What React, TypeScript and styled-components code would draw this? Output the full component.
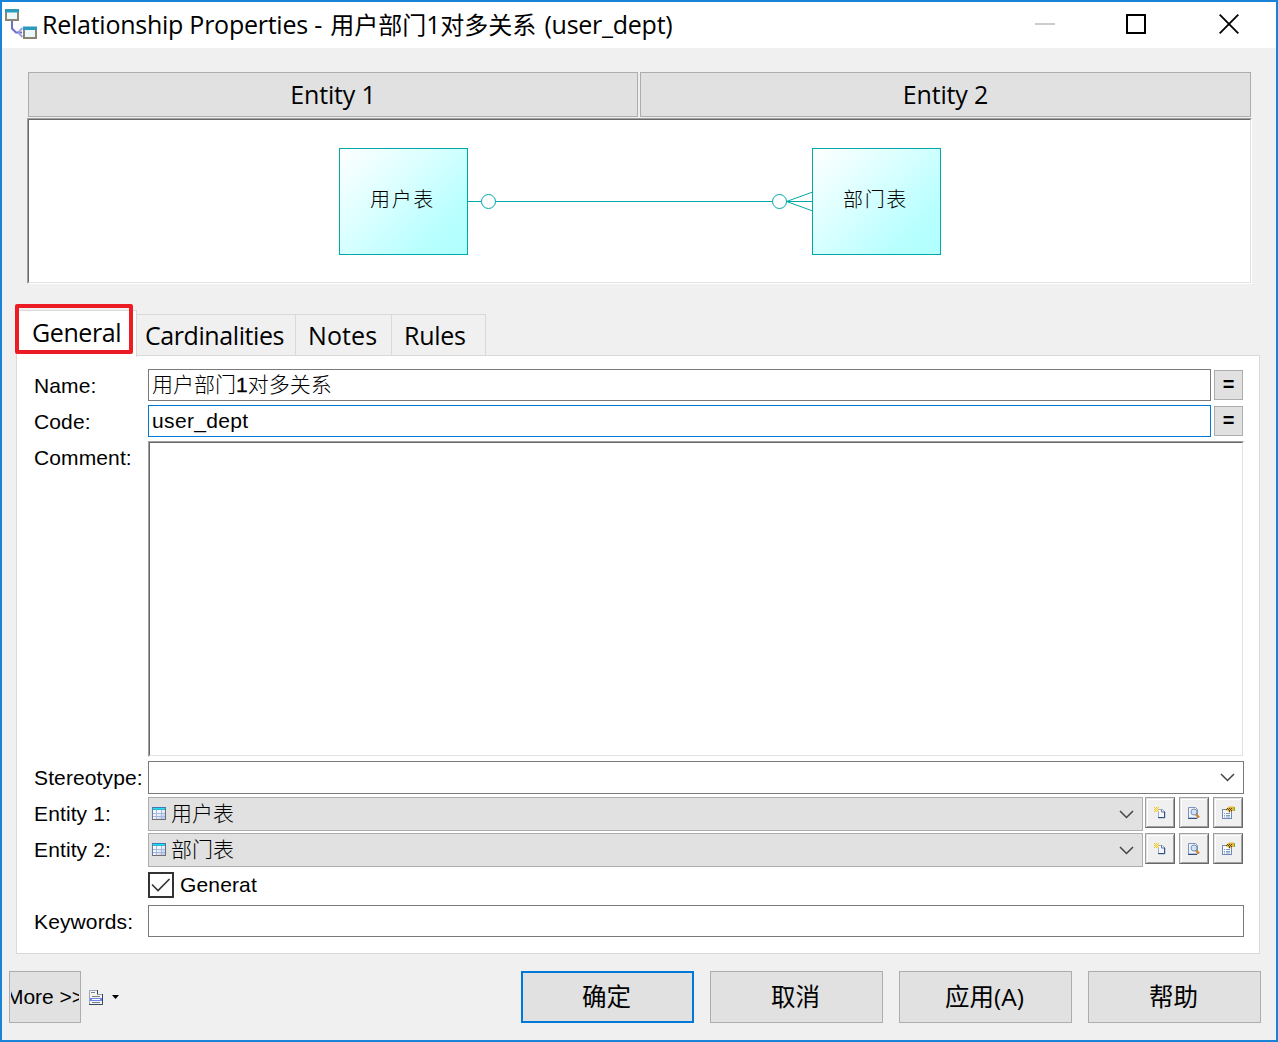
import React from "react";
import styled, { createGlobalStyle, css } from "styled-components";

const UI = `"Open Sans", "Noto Sans CJK SC", sans-serif`;
const FORM = `"Liberation Sans", "Noto Sans CJK SC", sans-serif`;

const GlobalStyle = createGlobalStyle`
  *, *::before, *::after { box-sizing: border-box; }
  body { margin: 0; }
  svg { display: block; flex: none; }
`;

const Window = styled.div`
  width: 1278px;
  height: 1042px;
  border: 2px solid #1883d7;
  background: #f0f0f0;
  color: #000;
  display: flex;
  flex-direction: column;
  overflow: hidden;
  font-family: ${FORM};
`;

const TitleBar = styled.header`
  height: 46px;
  background: #fff;
  display: flex;
  align-items: center;
  padding: 0 0 2px 3px;
  flex: none;
`;

const Title = styled.h1`
  margin: 0 0 0 5px;
  flex: 1;
  font: 400 25px/43px ${UI};
  letter-spacing: -0.25px;
  white-space: nowrap;
`;

const Cjk = styled.span<{ $before?: number; $after?: number }>`
  font-size: 24px;
  letter-spacing: 0;
  margin-left: ${(p) => p.$before ?? 0}px;
  margin-right: ${(p) => p.$after ?? 0}px;
`;

const Caption = styled.div`
  display: flex;
  align-items: center;
  gap: 71px;
  padding-right: 37px;
`;

const CloseIcon = styled.svg`
  margin-left: 2px;
`;

const Preview = styled.section`
  margin: 24px 24px 0 25px;
  flex: none;
`;

const HeaderCells = styled.div`
  display: grid;
  grid-template-columns: 610px 611px;
  gap: 2px;
  margin-left: 1px;
`;

const HeaderCell = styled.div`
  height: 45px;
  border: 1px solid #adadad;
  background: #e1e1e1;
  text-align: center;
  font: 400 25px/43px ${UI};
  letter-spacing: -0.15px;
`;

const sunken = css`
  border: 1px solid;
  border-color: #a0a0a0 #fff #fff #a0a0a0;
  background: #fff;
  &::before {
    content: "";
    display: block;
    height: 100%;
    border: 1px solid;
    border-color: #696969 #e3e3e3 #e3e3e3 #696969;
  }
`;

const Canvas = styled.div`
  margin-top: 1px;
  height: 166px;
  border: 1px solid;
  border-color: #a0a0a0 #fff #fff #a0a0a0;
`;

const CanvasInner = styled.div`
  height: 164px;
  border: 1px solid;
  border-color: #696969 #e3e3e3 #e3e3e3 #696969;
  background: #fff;
  display: flex;
  padding: 28px 0 0 310px;
`;

const EntityBox = styled.div`
  width: 129px;
  height: 107px;
  border: 1px solid #00a8a8;
  background: linear-gradient(135deg, #fff 0%, #d4ffff 48%, #b8ffff 78%, #b0ffff 100%);
  text-align: center;
  padding-right: 2px;
  font: 300 20px/103px ${FORM};
  letter-spacing: 1.6px;
  flex: none;
`;

const Tabs = styled.nav`
  display: flex;
  align-items: flex-end;
  height: 53px;
  margin: 20px 0 -2px 13px;
  position: relative;
  flex: none;
`;

const ActiveTab = styled.div`
  width: 121px;
  height: 47px;
  margin-left: 1px;
  border: 1px solid #d9d9d9;
  border-bottom: 0;
  background: #fff;
  padding-left: 15px;
  font: 400 25px/42px ${UI};
  letter-spacing: -0.4px;
  position: relative;
`;

const Highlight = styled.div`
  position: absolute;
  left: -2px;
  top: -7px;
  width: 118px;
  height: 50px;
  border: 4px solid #ed1c24;
  border-radius: 2px;
`;

const Tab = styled.div<{ $w: number; $pad: number; $ls?: number }>`
  width: ${(p) => p.$w}px;
  height: 41px;
  margin-bottom: 2px;
  border: 1px solid #d9d9d9;
  border-left: 0;
  border-bottom: 0;
  padding-left: ${(p) => p.$pad}px;
  font: 400 25px/41px ${UI};
  letter-spacing: ${(p) => p.$ls ?? -0.3}px;
`;

const Panel = styled.section`
  width: 1244px;
  height: 599px;
  margin-left: 14px;
  border: 1px solid #d9d9d9;
  background: #fff;
  padding: 13px 0 0 17px;
  flex: none;
`;

const Row = styled.div<{ $h?: number }>`
  display: flex;
  align-items: flex-start;
  height: ${(p) => p.$h ?? 36}px;
`;

const Label = styled.label`
  width: 114px;
  font-size: 21px;
  line-height: 34px;
  letter-spacing: 0.12px;
  white-space: nowrap;
  flex: none;
`;

const Field = styled.div<{ $w: number; $h?: number; $active?: boolean }>`
  width: ${(p) => p.$w}px;
  height: ${(p) => p.$h ?? 32}px;
  border: 1px solid ${(p) => (p.$active ? "#0078d7" : "#7a7a7a")};
  background: #fff;
  padding: 0 8px 0 3px;
  display: flex;
  align-items: center;
  font-size: 21px;
  line-height: 30px;
  font-weight: 300;
  flex: none;
`;

const FieldText = styled.span<{ $ls?: number }>`
  display: block;
  flex: 1;
  height: 30px;
  letter-spacing: ${(p) => p.$ls ?? 0}px;
  white-space: nowrap;
`;

const Digit = styled.span`
  font-weight: 400;
  -webkit-text-stroke: 0.3px #000;
`;

const EqualsButton = styled.div`
  width: 29px;
  height: 30px;
  margin: 1px 0 0 3px;
  border: 1px solid #adadad;
  background: #e1e1e1;
  display: flex;
  align-items: center;
  justify-content: center;
`;

const EqualsSign = styled.span`
  font-weight: 700;
  font-size: 20px;
  line-height: 27px;
  height: 28px;
`;

const CommentBox = styled.div`
  width: 1096px;
  height: 316px;
  ${sunken}
`;

const Combo = styled.div`
  width: 995px;
  height: 34px;
  border: 1px solid #adadad;
  background: #e1e1e1;
  padding: 0 8px 0 3px;
  display: flex;
  align-items: center;
  font-size: 21px;
  line-height: 32px;
  font-weight: 300;
  flex: none;
`;

const ComboText = styled.span`
  flex: 1;
  height: 32px;
  margin-left: 5px;
`;

const Tools = styled.div`
  display: flex;
  gap: 4px;
  margin-left: 2px;
`;

const ToolButton = styled.div`
  width: 30px;
  height: 31px;
  border: 1px solid;
  border-color: #a0a0a0 #696969 #696969 #a0a0a0;
  background: #f0f0f0;
  box-shadow: inset 1px 1px #e3e3e3, inset -1px -1px #a0a0a0, inset 2px 2px #fff;
  display: flex;
  align-items: center;
  justify-content: center;
`;

const CheckBox = styled.div`
  width: 26px;
  height: 26px;
  margin: 3px 6px 0 114px;
  border: 2px solid #333;
`;

const CheckLabel = styled.span`
  font-size: 21px;
  line-height: 32px;
  letter-spacing: 0.15px;
`;

const Footer = styled.footer`
  display: flex;
  align-items: flex-start;
  padding: 17px 15px 0 7px;
`;

const MoreButton = styled.div`
  width: 72px;
  height: 52px;
  border: 1px solid #adadad;
  background: #e1e1e1;
  display: flex;
  justify-content: center;
  padding: 0 1px;
  font-size: 21px;
  line-height: 50px;
`;

const MoreText = styled.span`
  width: 68px;
  overflow: hidden;
  display: flex;
  justify-content: center;
  white-space: nowrap;
`;

const MenuButton = styled.div`
  display: flex;
  align-items: center;
  gap: 9px;
  height: 52px;
  margin-left: 8px;
  flex: 1;
`;

const Actions = styled.div`
  display: flex;
  gap: 16px;
`;

const Action = styled.div<{ $primary?: boolean }>`
  width: 173px;
  height: 52px;
  border: ${(p) => (p.$primary ? "2px solid #0078d7" : "1px solid #adadad")};
  background: #e1e1e1;
  display: flex;
  align-items: center;
  justify-content: center;
  padding-right: 2px;
  font: 400 24.5px/52px ${UI};
`;

const RelationshipIcon = () => (
  <svg width="32" height="32" viewBox="0 0 32 32">
    <path d="M7 13v7.500l4 4H17" fill="none" stroke="#6a70c8" strokeWidth="2" />
    <path d="M13 24.500l4.500-4.500M13 24.500l4.500 4.500" stroke="#9aa2ea" strokeWidth="2" />
    <rect x="1" y="2" width="12" height="10" fill="#eafafc" stroke="#8d8372" strokeWidth="2" />
    <rect x="0" y="1" width="14" height="3.500" fill="#2b9abb" />
    <rect x="19" y="20" width="12" height="10" fill="#eafafc" stroke="#8d8372" strokeWidth="2" />
    <rect x="18" y="18.500" width="14" height="3.500" fill="#2b9abb" />
  </svg>
);

const Connector = () => (
  <svg width="344" height="105" viewBox="468 148 344 105" fill="none" stroke="#00a8a8">
    <path d="M468 201.500H481.500M495.500 201.500H772.500M786.500 201.500H812" />
    <circle cx="488.500" cy="201.500" r="7" />
    <circle cx="779.500" cy="201.500" r="7" />
    <path d="M786.500 201.500L812 192.300M786.500 201.500L812 210.700" />
  </svg>
);

const Chevron = () => (
  <svg width="15" height="9" viewBox="0 0 15 9">
    <path d="M1 1l6.500 6.500L14 1" fill="none" stroke="#444" strokeWidth="1.500" />
  </svg>
);

const TableIcon = () => (
  <svg width="14" height="14" viewBox="0 0 14 14">
    <defs>
      <linearGradient id="cells" x1="0" y1="0" x2="1" y2="1">
        <stop offset="0" stopColor="#fff" />
        <stop offset=".5" stopColor="#f0f4ff" />
        <stop offset="1" stopColor="#a9c0f2" />
      </linearGradient>
    </defs>
    <rect x=".5" y=".5" width="13" height="12" fill="url(#cells)" />
    <path d="M1 6.500h12M1 9.500h12M4.500 3v9M9.500 3v9" stroke="#a9b7d6" />
    <path d="M.5 0v13" stroke="#5b7fb4" />
    <path d="M13.500 0v13M0 12.500h14" stroke="#746f68" />
    <path d="M0 .5h14" stroke="#3f78b8" />
    <path d="M1 1.500h12" stroke="#17e3f2" />
    <path d="M1 2.500h12" stroke="#35b3cf" />
  </svg>
);

const NewIcon = () => (
  <svg width="12" height="12" viewBox="0 0 12 12">
    <path d="M4.500 2.500h4l2.500 2.500v6h-6.500z" fill="#f4f7ff" stroke="#9dabc8" />
    <path d="M10.500 4.500V10.500H4" fill="none" stroke="#34507f" />
    <path d="M7.500 2.500v2.500H10" fill="none" stroke="#5d77a3" />
    <rect width="5" height="5" fill="#fdf3b8" />
    <path d="M0 .5h1M2 .5h1M4 .5h1M1 1.500h1M3 1.500h1M0 2.500h1M2 2.500h1M4 2.500h1M1 3.500h1M3 3.500h1M0 4.500h1M2 4.500h1M4 4.500h1" stroke="#e8c23a" />
  </svg>
);

const FindIcon = () => (
  <svg width="12" height="12" viewBox="0 0 12 12">
    <path d="M.5.500h7l2 2v8.500h-9z" fill="#eef3ff" stroke="#7d93ba" />
    <circle cx="6" cy="5" r="3" fill="#cfe4f8" stroke="#7f90ab" />
    <path d="M8 7.500l3 3" stroke="#cf8433" strokeWidth="2.400" />
    <path d="M0 11.500h9" stroke="#34507f" />
  </svg>
);

const PropertiesIcon = () => (
  <svg width="13" height="13" viewBox="0 0 13 13">
    <rect x=".5" y="3.500" width="9" height="9" fill="#f7faff" stroke="#7089b4" />
    <path d="M2 7.500h1M4 7.500h4M2 9.500h1M4 9.500h4M2 11h1M4 11h4" stroke="#8299c2" />
    <path d="M3 4l4-3.500h5V5H9L7.500 7 6 5z" fill="#e6b63a" />
    <path d="M4 3.500h1M6 3.500h1M8 3.500h1M5 2.500h1M7 2.500h1M9 2.500h1M7 4.500h1M9 4.500h1M7 5.500h1" stroke="#62450a" />
    <path d="M12.500 1v4" stroke="#62b34a" />
  </svg>
);

const PageMenuIcon = () => (
  <svg width="14" height="15" viewBox="0 0 14 15">
    <path d="M.5.500h8v4h5v10H.5z" fill="#f2f4f7" stroke="#9aa6b6" />
    <path d="M8.500 0v4.500M13.500 4v10.500H0" fill="none" stroke="#34475f" />
    <path d="M2 2.500h4M3 6.500h8M3 12.500h8" stroke="#808080" />
    <rect x="1" y="8" width="12" height="3" fill="#6c86f0" />
    <path d="M3 9.500h8" stroke="#fff" />
  </svg>
);

const EntityRow = ({ label, value }: { label: string; value: string }) => (
  <Row>
    <Label>{label}</Label>
    <Combo>
      <TableIcon />
      <ComboText>{value}</ComboText>
      <Chevron />
    </Combo>
    <Tools>
      <ToolButton><NewIcon /></ToolButton>
      <ToolButton><FindIcon /></ToolButton>
      <ToolButton><PropertiesIcon /></ToolButton>
    </Tools>
  </Row>
);

export default function App() {
  return (
    <>
      <GlobalStyle />
      <Window>
        <TitleBar>
          <RelationshipIcon />
          <Title>
            Relationship Properties - <Cjk $before={2}>用户部门</Cjk>1<Cjk $after={2}>对多关系</Cjk> (user_dept)
          </Title>
          <Caption>
            <svg width="20" height="20"><path d="M0 10h20" stroke="#ccc" strokeWidth="2" /></svg>
            <svg width="20" height="20"><rect x="1" y="1" width="18" height="18" fill="none" stroke="#000" strokeWidth="2" /></svg>
            <CloseIcon width="20" height="20"><path d="M.7.700l18.600 18.600M19.300.700L.7 19.300" stroke="#000" strokeWidth="1.800" /></CloseIcon>
          </Caption>
        </TitleBar>

        <Preview>
          <HeaderCells>
            <HeaderCell>Entity 1</HeaderCell>
            <HeaderCell>Entity 2</HeaderCell>
          </HeaderCells>
          <Canvas>
            <CanvasInner>
              <EntityBox>用户表</EntityBox>
              <Connector />
              <EntityBox>部门表</EntityBox>
            </CanvasInner>
          </Canvas>
        </Preview>

        <Tabs>
          <ActiveTab>General<Highlight /></ActiveTab>
          <Tab $w={159} $pad={8} $ls={-0.42}>Cardinalities</Tab>
          <Tab $w={96} $pad={12} $ls={0.1}>Notes</Tab>
          <Tab $w={94} $pad={12}>Rules</Tab>
        </Tabs>

        <Panel>
          <Row>
            <Label>Name:</Label>
            <Field $w={1063}><FieldText>用户部门<Digit>1</Digit>对多关系</FieldText></Field>
            <EqualsButton><EqualsSign>=</EqualsSign></EqualsButton>
          </Row>
          <Row>
            <Label>Code:</Label>
            <Field $w={1063} $active><FieldText $ls={0.35}>user_dept</FieldText></Field>
            <EqualsButton><EqualsSign>=</EqualsSign></EqualsButton>
          </Row>
          <Row $h={320}>
            <Label>Comment:</Label>
            <CommentBox />
          </Row>
          <Row>
            <Label>Stereotype:</Label>
            <Field $w={1096} $h={33}><FieldText /><Chevron /></Field>
          </Row>
          <EntityRow label="Entity 1:" value="用户表" />
          <EntityRow label="Entity 2:" value="部门表" />
          <Row>
            <CheckBox>
              <svg width="22" height="22"><path d="M2 10.500l6 6L19.500 5" fill="none" stroke="#333" strokeWidth="1.600" /></svg>
            </CheckBox>
            <CheckLabel>Generat</CheckLabel>
          </Row>
          <Row>
            <Label>Keywords:</Label>
            <Field $w={1096} />
          </Row>
        </Panel>

        <Footer>
          <MoreButton><MoreText>More &gt;&gt;</MoreText></MoreButton>
          <MenuButton>
            <PageMenuIcon />
            <svg width="7" height="4"><path d="M0 0h7L3.500 4z" fill="#000" /></svg>
          </MenuButton>
          <Actions>
            <Action $primary>确定</Action>
            <Action>取消</Action>
            <Action>应用(A)</Action>
            <Action>帮助</Action>
          </Actions>
        </Footer>
      </Window>
    </>
  );
}
